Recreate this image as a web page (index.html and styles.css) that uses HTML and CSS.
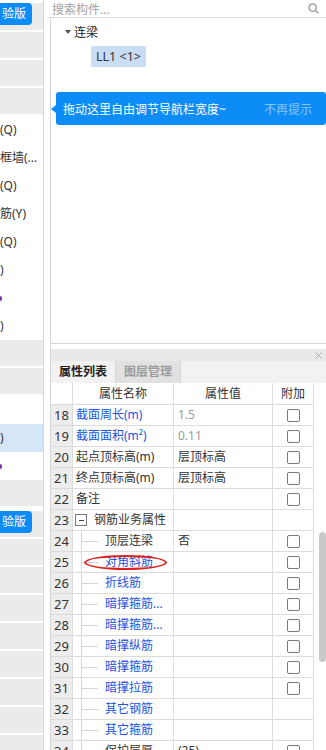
FILE: index.html
```html
<!DOCTYPE html>
<html lang="zh">
<head>
<meta charset="utf-8">
<title>属性列表</title>
<link rel="stylesheet" href="styles.css">
</head>
<body>
<div class="app">
  <aside class="nav">
    <div class="grp first"><span class="badge">验版</span></div>
    <div class="grp"></div>
    <div class="grp"></div>
    <div class="grp"></div>
    <div class="item">(Q)</div>
    <div class="item">框墙(...</div>
    <div class="item">(Q)</div>
    <div class="item">筋(Y)</div>
    <div class="item">(Q)</div>
    <div class="item">)</div>
    <div class="item"><span class="tail"></span></div>
    <div class="item">)</div>
    <div class="grp"></div>
    <div class="grp"></div>
    <div class="item"></div>
    <div class="item sel">)</div>
    <div class="item"><span class="tail"></span></div>
    <div class="grp"></div>
    <div class="grp"><span class="badge">验版</span></div>
    <div class="grp"></div>
    <div class="grp"></div>
    <div class="grp"></div>
    <div class="grp"></div>
    <div class="grp"></div>
    <div class="grp"></div>
    <div class="grp"></div>
    <div class="grp"></div>
  </aside>
  <div class="splitter"></div>
  <main class="main">
    <div class="search">
      <span>搜索构件...</span>
      <svg class="search-icon" width="11" height="11" viewBox="0 0 11 11"><circle cx="4.6" cy="4.6" r="3.7" fill="none" stroke="#9b9b9b" stroke-width="1.3"/><line x1="7.3" y1="7.3" x2="10.3" y2="10.3" stroke="#9b9b9b" stroke-width="1.4"/></svg>
    </div>
    <div class="panels">
      <div class="tree">
        <div class="tree-node"><span class="caret"></span><span>连梁</span></div>
        <div class="chip">LL1 &lt;1&gt;</div>
        <div class="tip"><span>拖动这里自由调节导航栏宽度~</span><span class="tip-close">不再提示</span></div>
      </div>
      <div class="gap"></div>
      <section class="props">
        <div class="props-bar"><svg width="7" height="7" viewBox="0 0 7 7"><path d="M0.5 0.5 L6.5 6.5 M6.5 0.5 L0.5 6.5" stroke="#a8a8a8" stroke-width="1"/></svg></div>
        <div class="tabs"><div class="tab">属性列表</div><div class="tab off">图层管理</div><div class="tabs-rest"></div></div>
        <div class="grid-row head"><div class="num"></div><div>属性名称</div><div>属性值</div><div>附加</div></div>
        <div class="grid-row"><div class="num">18</div><div class="name blue">截面周长(m)</div><div class="val muted">1.5</div><div class="chk"><span class="box"></span></div></div>
        <div class="grid-row"><div class="num">19</div><div class="name blue">截面面积(m²)</div><div class="val muted">0.11</div><div class="chk"><span class="box"></span></div></div>
        <div class="grid-row"><div class="num">20</div><div class="name">起点顶标高(m)</div><div class="val">层顶标高</div><div class="chk"><span class="box"></span></div></div>
        <div class="grid-row"><div class="num">21</div><div class="name">终点顶标高(m)</div><div class="val">层顶标高</div><div class="chk"><span class="box"></span></div></div>
        <div class="grid-row"><div class="num">22</div><div class="name">备注</div><div class="val"></div><div class="chk"><span class="box"></span></div></div>
        <div class="grid-row"><div class="num">23</div><div class="name group"><span class="minus"></span><span>钢筋业务属性</span></div><div class="val"></div><div class="chk"></div></div>
        <div class="grid-row"><div class="num">24</div><div class="name leaf">顶层连梁</div><div class="val">否</div><div class="chk"><span class="box"></span></div></div>
        <div class="grid-row"><div class="num">25</div><div class="name leaf blue">对角斜筋</div><div class="val"></div><div class="chk"><span class="box"></span></div></div>
        <div class="grid-row"><div class="num">26</div><div class="name leaf blue">折线筋</div><div class="val"></div><div class="chk"><span class="box"></span></div></div>
        <div class="grid-row"><div class="num">27</div><div class="name leaf blue">暗撑箍筋...</div><div class="val"></div><div class="chk"><span class="box"></span></div></div>
        <div class="grid-row"><div class="num">28</div><div class="name leaf blue">暗撑箍筋...</div><div class="val"></div><div class="chk"><span class="box"></span></div></div>
        <div class="grid-row"><div class="num">29</div><div class="name leaf blue">暗撑纵筋</div><div class="val"></div><div class="chk"><span class="box"></span></div></div>
        <div class="grid-row"><div class="num">30</div><div class="name leaf blue">暗撑箍筋</div><div class="val"></div><div class="chk"><span class="box"></span></div></div>
        <div class="grid-row"><div class="num">31</div><div class="name leaf blue">暗撑拉筋</div><div class="val"></div><div class="chk"><span class="box"></span></div></div>
        <div class="grid-row"><div class="num">32</div><div class="name leaf blue">其它钢筋</div><div class="val"></div><div class="chk"></div></div>
        <div class="grid-row"><div class="num">33</div><div class="name leaf blue">其它箍筋</div><div class="val"></div><div class="chk"></div></div>
        <div class="grid-row"><div class="num">34</div><div class="name leaf">保护层厚...</div><div class="val">(25)</div><div class="chk"><span class="box"></span></div></div>
        <div class="scroll"></div>
        <div class="mark"></div>
      </section>
    </div>
  </main>
</div>
</body>
</html>
```

FILE: styles.css
```css
html, body {
  margin: 0;
  padding: 0;
}
body {
  width: 326px;
  height: 750px;
  overflow: hidden;
  background: #fff;
  font-family: "Noto Sans", "Noto Sans CJK SC", sans-serif;
  font-size: 12px;
  color: #333;
}
.app {
  display: flex;
  height: 750px;
}
.nav {
  width: 43px;
  flex: none;
  border-right: 1px solid #d6d6d6;
  overflow: hidden;
  background: #fff;
}
.grp {
  height: 26px;
  border-bottom: 2px solid #fff;
  background: #ebebeb;
}
.grp.first {
  height: 27px;
}
.badge {
  display: block;
  box-sizing: border-box;
  width: 32px;
  height: 22px;
  margin-top: 3px;
  padding-left: 2px;
  background: #0e8cf5;
  color: #fff;
  border-radius: 0 4px 4px 0;
  line-height: 22px;
  font-size: 12px;
  white-space: nowrap;
  overflow: hidden;
}
.item {
  height: 28px;
  line-height: 28px;
  white-space: nowrap;
  overflow: hidden;
  color: #333;
}
.item.sel {
  background: #d5e6f9;
}
.tail {
  display: inline-block;
  width: 2px;
  height: 5px;
  background: #7d3a9c;
  border-radius: 0 2px 2px 0;
  vertical-align: middle;
}
.splitter {
  width: 3px;
  flex: none;
}
.main {
  flex: 1;
  min-width: 0;
  display: flex;
  flex-direction: column;
}
.search {
  height: 17px;
  border-bottom: 1px solid #dedede;
  display: flex;
  align-items: center;
  justify-content: space-between;
  padding: 0 7px 0 5px;
  color: #a3a3a3;
  font-size: 12px;
  flex: none;
}
.search-icon {
  display: block;
}
.panels {
  flex: 1;
  margin-left: 3px;
  border-left: 1px solid #d4d4d4;
  display: flex;
  flex-direction: column;
  min-height: 0;
}
.tree {
  height: 325px;
  flex: none;
  border-bottom: 1px solid #d6d6d6;
  position: relative;
}
.tree-node {
  display: flex;
  align-items: center;
  gap: 3px;
  height: 20px;
  margin-top: 4px;
  padding-left: 14px;
  color: #222;
  font-size: 12px;
}
.caret {
  width: 0;
  height: 0;
  border-left: 3px solid transparent;
  border-right: 3px solid transparent;
  border-top: 4px solid #555;
}
.chip {
  display: inline-block;
  margin: 4px 0 0 40px;
  height: 21px;
  line-height: 21px;
  padding: 0 5px;
  background: #c8ddf3;
  border-radius: 2px;
  color: #333;
  font-size: 12.5px;
}
.tip {
  position: absolute;
  left: 5px;
  right: 0;
  top: 74px;
  height: 33px;
  background: #0c8cf6;
  border-radius: 3px;
  display: flex;
  align-items: center;
  justify-content: space-between;
  padding: 0 14px 0 7px;
  color: #fff;
  font-size: 12px;
}
.tip::before {
  content: "";
  position: absolute;
  left: -5px;
  top: 13px;
  border-right: 5px solid #0c8cf6;
  border-top: 4px solid transparent;
  border-bottom: 4px solid transparent;
}
.tip-close {
  color: rgba(255, 255, 255, 0.5);
}
.gap {
  height: 5px;
  flex: none;
}
.props {
  flex: 1;
  position: relative;
  overflow: hidden;
}
.props-bar {
  height: 12px;
  background: #e9e9e9;
  display: flex;
  justify-content: flex-end;
  align-items: center;
  padding-right: 4px;
}
.props-bar svg {
  display: block;
}
.tabs {
  height: 22px;
  background: #f2f2f2;
  display: flex;
}
.tab {
  width: 64px;
  border-right: 1px solid #d6d6d6;
  text-align: center;
  line-height: 22px;
  font-weight: 700;
  font-size: 12px;
  color: #222;
}
.tab.off {
  background: #e1e1e1;
  color: #9c9c9c;
}
.grid-row {
  display: grid;
  grid-template-columns: 22px 101px 99px 41px;
  height: 21px;
}
.grid-row > div {
  box-sizing: border-box;
  border-right: 1px solid #dcdcdc;
  border-bottom: 1px solid #dcdcdc;
  line-height: 20px;
  white-space: nowrap;
  overflow: hidden;
}
.grid-row.head {
  height: 22px;
}
.grid-row.head > div {
  line-height: 21px;
  text-align: center;
  color: #333;
}
.num {
  background: #ededed;
  text-align: center;
  font-size: 13px;
  color: #333;
}
.head .num {
  background: #fff;
}
.name {
  padding-left: 3px;
  position: relative;
  color: #333;
}
.val {
  padding-left: 4px;
}
.grid-row > .blue {
  color: #2452de;
}
.muted {
  color: #9a9a9a;
}
.chk {
  display: flex;
  align-items: center;
  justify-content: center;
}
.box {
  width: 13px;
  height: 13px;
  box-sizing: border-box;
  border: 1px solid #7a7a7a;
  border-radius: 2px;
  background: #fff;
}
.grid-row > .group {
  display: flex;
  align-items: center;
  gap: 7px;
  padding-left: 2px;
}
.minus {
  width: 12px;
  height: 12px;
  box-sizing: border-box;
  border: 1px solid #777;
  display: flex;
  align-items: center;
  justify-content: center;
  background: #fff;
}
.minus::after {
  content: "";
  width: 5px;
  height: 1px;
  background: #444;
}
.grid-row > .leaf {
  padding-left: 32px;
}
.leaf::before {
  content: "";
  position: absolute;
  left: 8px;
  top: 0;
  bottom: 0;
  width: 1px;
  background: #d6d6d6;
}
.leaf::after {
  content: "";
  position: absolute;
  left: 9px;
  top: 10px;
  width: 16px;
  height: 1px;
  background: #d6d6d6;
}
.scroll {
  position: absolute;
  left: 268px;
  top: 183px;
  width: 7px;
  height: 130px;
  border-radius: 4px;
  background: #c9c9c9;
}
.mark {
  position: absolute;
  left: 33px;
  top: 206px;
  width: 83px;
  height: 15px;
  box-sizing: border-box;
  border: 2px solid #e0201c;
  border-radius: 50%;
}
```
